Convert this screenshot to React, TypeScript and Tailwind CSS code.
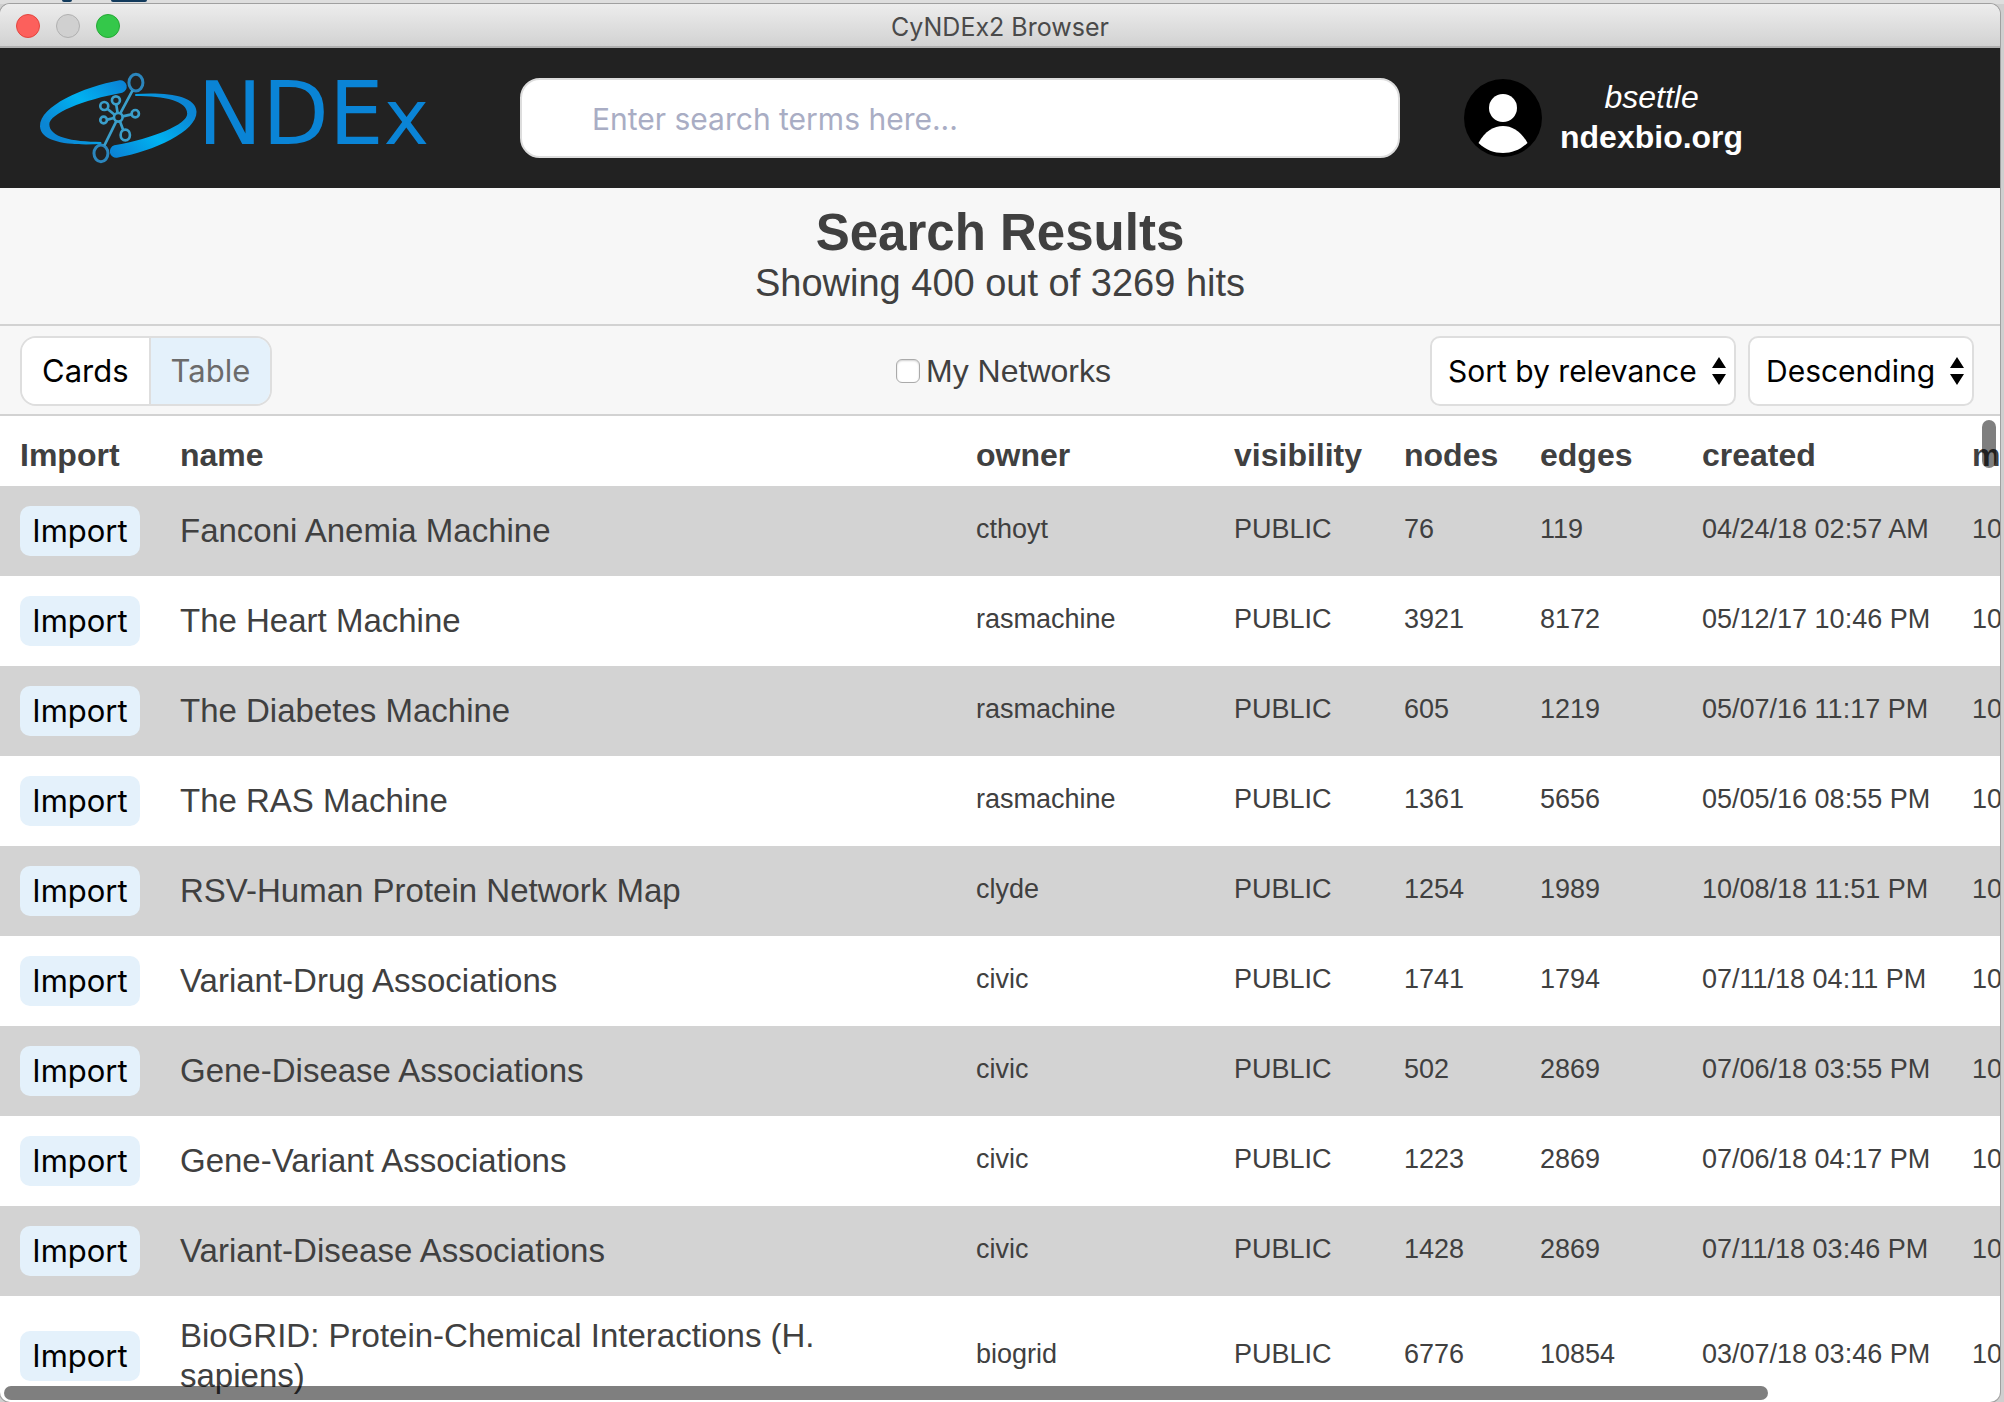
import React from "react";

type Network = {
  name: string;
  owner: string;
  nodes: string;
  edges: string;
  created: string;
};

const networks: Network[] = [
  { name: "Fanconi Anemia Machine", owner: "cthoyt", nodes: "76", edges: "119", created: "04/24/18 02:57 AM" },
  { name: "The Heart Machine", owner: "rasmachine", nodes: "3921", edges: "8172", created: "05/12/17 10:46 PM" },
  { name: "The Diabetes Machine", owner: "rasmachine", nodes: "605", edges: "1219", created: "05/07/16 11:17 PM" },
  { name: "The RAS Machine", owner: "rasmachine", nodes: "1361", edges: "5656", created: "05/05/16 08:55 PM" },
  { name: "RSV-Human Protein Network Map", owner: "clyde", nodes: "1254", edges: "1989", created: "10/08/18 11:51 PM" },
  { name: "Variant-Drug Associations", owner: "civic", nodes: "1741", edges: "1794", created: "07/11/18 04:11 PM" },
  { name: "Gene-Disease Associations", owner: "civic", nodes: "502", edges: "2869", created: "07/06/18 03:55 PM" },
  { name: "Gene-Variant Associations", owner: "civic", nodes: "1223", edges: "2869", created: "07/06/18 04:17 PM" },
  { name: "Variant-Disease Associations", owner: "civic", nodes: "1428", edges: "2869", created: "07/11/18 03:46 PM" },
  { name: "BioGRID: Protein-Chemical Interactions (H. sapiens)", owner: "biogrid", nodes: "6776", edges: "10854", created: "03/07/18 03:46 PM" },
];

const columns = ["Import", "name", "owner", "visibility", "nodes", "edges", "created", "modified"];

const swoosh =
  "M360 240 C250 260 120 318 121 378 C123 426 208 437 305 431 L305 425 C215 425 149 410 149 372 C149 340 250 298 368 277 A19 19 0 0 0 360 240 Z";

function Logo() {
  return (
    <svg className="h-[94px] w-[421px] shrink-0 overflow-visible" viewBox="118 212 1264 282" role="img" aria-label="NDEx">
      <defs>
        <linearGradient id="swoosh" gradientUnits="userSpaceOnUse" x1="370" y1="250" x2="200" y2="430">
          <stop offset="0" stopColor="#0a84d6" />
          <stop offset="0.5" stopColor="#00b2f1" />
          <stop offset="1" stopColor="#0b86d4" />
        </linearGradient>
      </defs>
      <path d={swoosh} fill="url(#swoosh)" />
      <path d={swoosh} fill="url(#swoosh)" transform="rotate(180 356 356)" />
      <g fill="none" stroke="#2b86bd" strokeWidth="9">
        <ellipse cx="409" cy="247" rx="21" ry="25" />
        <ellipse cx="304" cy="459" rx="21" ry="25" />
      </g>
      <g fill="none" stroke="#3a9fcb" strokeWidth="8">
        <path d="M399 270 L362 339 M350 363 L314 436 M354 338 L350 313 M345 343 L323 325 M343 353 L323 358 M369 348 L396 342 M361 363 L371 390" />
        <circle cx="356" cy="351" r="13" />
        <circle cx="349" cy="300" r="12" />
        <circle cx="314" cy="317" r="12" />
        <circle cx="312" cy="359" r="10" />
        <circle cx="407" cy="340" r="11" />
        <ellipse cx="377" cy="404" rx="14" ry="16" />
      </g>
      <text x="594" y="430" fill="#0a84d6" fontSize="260" className="font-['DejaVu_Sans']">
        NDE<tspan fontSize="230">x</tspan>
      </text>
    </svg>
  );
}

function SortSelect({ label, options, className }: { label: string; options: string[]; className: string }) {
  return (
    <div className="relative">
      <select
        aria-label={label}
        className={`h-[70px] appearance-none rounded-[10px] border-2 border-[#dedede] bg-white pl-4 font-[Inter] text-[30px] text-black ${className}`}
      >
        {options.map((o) => (
          <option key={o}>{o}</option>
        ))}
      </select>
      <svg className="pointer-events-none absolute top-[21px] right-[10px] h-7 w-[14px]" viewBox="0 0 14 28">
        <path d="M7 0 L14 11 H0 Z M0 17 H14 L7 28 Z" />
      </svg>
    </div>
  );
}

export default function App() {
  return (
    <div className="flex h-screen flex-col overflow-hidden bg-[#cfcfcf] pr-1 font-['Liberation_Sans',Arial,sans-serif] text-[#404040]">
      <div className="-mr-1 flex h-1 shrink-0 items-start bg-[#dedede]">
        <div className="ml-[62px] h-[2px] w-[10px] rounded-b bg-[#123a5c]" />
        <div className="ml-[39px] h-[2px] w-9 rounded-b bg-[#123a5c]" />
      </div>

      <div className="flex min-h-0 flex-1 flex-col overflow-hidden rounded-[10px] bg-white shadow-[0_0_0_1px_#a0a0a0]">
        <div className="grid h-11 shrink-0 grid-cols-[1fr_auto_1fr] items-center border-b-2 border-[#b0b0b0] bg-linear-to-b from-[#ededed] to-[#d2d2d2]">
          <div className="flex gap-4 pt-px pl-4">
            <button aria-label="Close" className="size-6 rounded-full border border-[#e2463f] bg-[#fc605c]" />
            <button aria-label="Minimize" className="size-6 rounded-full border border-[#b0b0b0] bg-[#d0d0d0]" />
            <button aria-label="Zoom" className="size-6 rounded-full border border-[#25a835] bg-[#34c84a]" />
          </div>
          <div className="pt-[3px] font-[Inter] text-[25px] leading-8 text-[#4a4a4a]">CyNDEx2 Browser</div>
        </div>

        <header className="flex h-[140px] shrink-0 items-center bg-[#222222] pl-[39px]">
          <Logo />
          <input
            type="text"
            aria-label="Search"
            placeholder="Enter search terms here..."
            className="ml-[60px] h-20 min-w-0 flex-1 rounded-[20px] border-2 border-[#dddddd] bg-white pt-[2px] pl-[70px] font-[Inter] text-[30px] placeholder:text-[#a9adc4]"
          />
          <div className="ml-16 flex w-[536px] items-center gap-[18px]">
            <svg className="size-[78px] shrink-0" viewBox="0 0 78 78" role="img" aria-label="User">
              <circle cx="39" cy="39" r="39" fill="#000" />
              <circle cx="39" cy="29" r="14" fill="#fff" />
              <path d="M14.500 64 C21 52 30 47 39 47 C48 47 57 52 63.500 64 C56 71 48 74 39 74 C30 74 22 71 14.500 64 Z" fill="#fff" />
            </svg>
            <div className="pb-[2px] text-center text-[32px] leading-10 text-white">
              <div className="italic">bsettle</div>
              <div className="font-bold">ndexbio.org</div>
            </div>
          </div>
        </header>

        <section className="shrink-0 border-b-2 border-[#d2d2d2] bg-[#f7f7f7] pt-[17px] pb-[19px] text-center">
          <h1 className="text-[51px] leading-[56px] font-bold">Search Results</h1>
          <p className="text-[38px] leading-[44px]">Showing 400 out of 3269 hits</p>
        </section>

        <div className="grid shrink-0 grid-cols-[1fr_auto_1fr] items-center border-b-2 border-[#d2d2d2] bg-[#f7f7f7] px-5 pt-[10px] pb-2">
          <div className="flex">
            <div className="flex h-[70px] overflow-hidden rounded-2xl border-2 border-[#dedede] font-[Inter] text-[31px]">
              <button className="border-r-2 border-[#dedede] bg-white px-5 text-black">Cards</button>
              <button className="bg-[#e4f1fb] px-5 text-[#6b6b6b]">Table</button>
            </div>
          </div>
          <label className="flex items-center gap-[6px] pl-[7px] text-[32px] leading-10">
            <input
              type="checkbox"
              className="size-6 appearance-none rounded-md border border-[#aaaaaa] bg-white shadow-[inset_0_1px_2px_#d0d0d0]"
            />
            My Networks
          </label>
          <div className="mr-[6px] flex justify-end gap-3">
            <SortSelect label="Sort by" options={["Sort by relevance"]} className="w-[306px]" />
            <SortSelect label="Order" options={["Descending"]} className="w-[226px]" />
          </div>
        </div>

        <div className="relative min-h-0 flex-1 overflow-hidden">
          <table className="w-[113%] table-fixed text-left">
            <colgroup>
              <col className="w-40" />
              <col />
              <col className="w-[258px]" />
              <col className="w-[170px]" />
              <col className="w-[136px]" />
              <col className="w-[162px]" />
              <col className="w-[270px]" />
              <col className="w-[308px]" />
            </colgroup>
            <thead>
              <tr className="h-[70px]">
                {columns.map((c) => (
                  <th key={c} className="px-5 pt-2 text-[32px] leading-10 font-bold">
                    {c}
                  </th>
                ))}
              </tr>
            </thead>
            <tbody className="text-[27px] leading-8">
              {networks.map((n) => (
                <tr key={n.name} className="odd:bg-[#d3d3d3]">
                  <td className="px-5 py-5">
                    <button className="block h-[50px] w-[120px] rounded-[10px] bg-[#e4f1fb] font-[Inter] text-[31px] text-black">
                      Import
                    </button>
                  </td>
                  <td className="py-5 pr-28 pl-5 text-[33px] leading-10">{n.name}</td>
                  <td className="px-5 pb-1">{n.owner}</td>
                  <td className="px-5 pb-1">PUBLIC</td>
                  <td className="px-5 pb-1">{n.nodes}</td>
                  <td className="px-5 pb-1">{n.edges}</td>
                  <td className="pb-1 pl-5 whitespace-nowrap">{n.created}</td>
                  <td className="pb-1 pl-5 whitespace-nowrap">10/16/18 09:12 PM</td>
                </tr>
              ))}
            </tbody>
          </table>
          <div className="absolute top-1 right-1 h-12 w-[14px] rounded-full bg-black/50" />
          <div className="absolute right-[232px] bottom-[2px] left-1 h-[14px] rounded-full bg-black/50" />
        </div>
      </div>
    </div>
  );
}
